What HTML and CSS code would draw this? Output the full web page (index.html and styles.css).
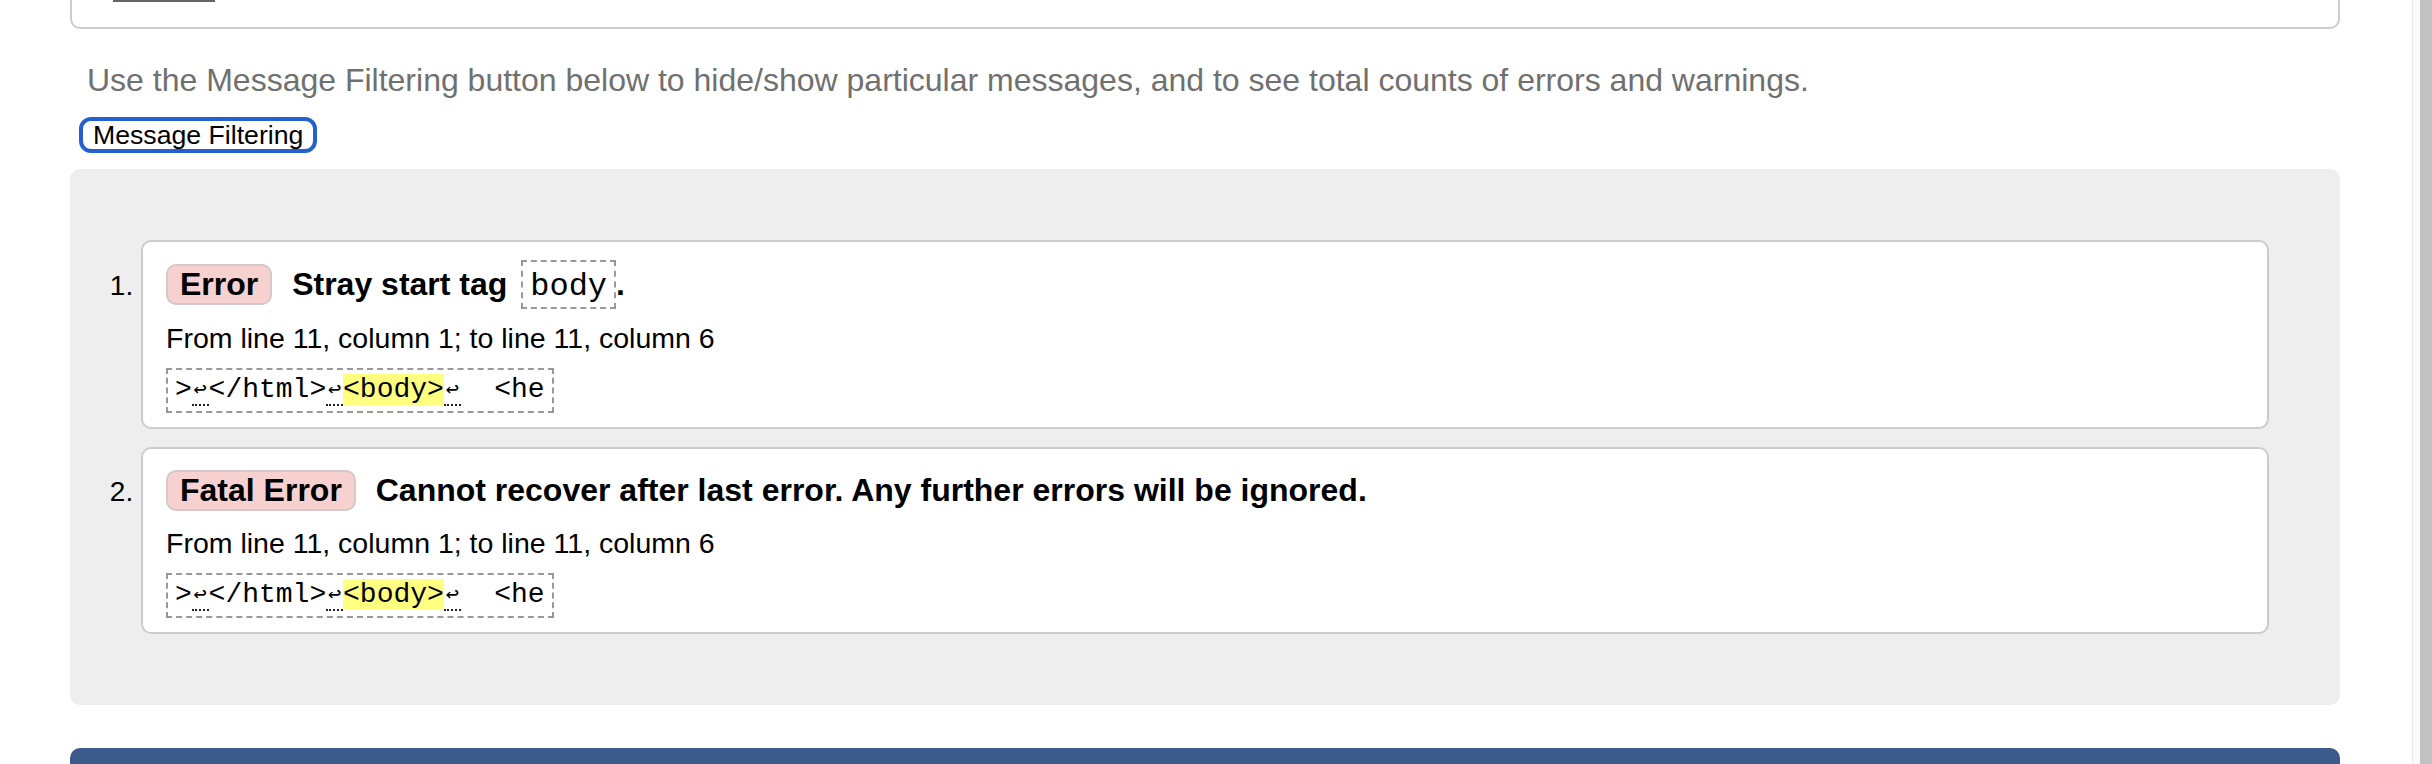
FILE: index.html
```html
<!DOCTYPE html>
<html lang="en">
<head>
<meta charset="utf-8">
<title>Nu Html Checker results</title>
<link rel="stylesheet" href="styles.css">
</head>
<body>
<main class="page">
  <div class="top-box"><div class="top-box-rule"></div></div>
  <p class="intro">Use the Message Filtering button below to hide/show particular messages, and to see total counts of errors and warnings.</p>
  <div class="filter-row"><button class="filter-btn" type="button">Message Filtering</button></div>
  <section class="results">
    <ol class="messages">
      <li class="card">
        <p class="title"><span class="badge">Error</span> <span>Stray start tag <code class="code-inline">body</code>.</span></p>
        <p class="location">From line 11, column 1; to line 11, column 6</p>
        <p class="extract-line"><code class="extract">&gt;<span class="lf">↩</span>&lt;/html&gt;<span class="lf">↩</span><mark class="hl">&lt;body&gt;</mark><span class="lf">↩</span>  &lt;he</code></p>
      </li>
      <li class="card">
        <p class="title"><span class="badge">Fatal Error</span> <span>Cannot recover after last error. Any further errors will be ignored.</span></p>
        <p class="location">From line 11, column 1; to line 11, column 6</p>
        <p class="extract-line"><code class="extract">&gt;<span class="lf">↩</span>&lt;/html&gt;<span class="lf">↩</span><mark class="hl">&lt;body&gt;</mark><span class="lf">↩</span>  &lt;he</code></p>
      </li>
    </ol>
  </section>
  <div class="footer-bar"></div>
</main>
<aside class="scrollbar"><div class="scrollbar-thumb"></div></aside>
</body>
</html>
```
FILE: styles.css
```css
html, body {
  margin: 0;
  padding: 0;
  height: 764px;
  overflow: hidden;
  background: #fff;
}

body {
  display: flex;
  font-family: "Liberation Sans", Arial, sans-serif;
  color: #000;
}

.page {
  flex: 1;
  min-width: 0;
  padding: 0 72px 0 70px;
}

.top-box {
  height: 27px;
  border: 2px solid #ccc;
  border-top: none;
  border-radius: 0 0 10px 10px;
}

.top-box-rule {
  margin-left: 41px;
  width: 102px;
  height: 2px;
  background: #666;
}

.intro {
  margin: 33px 0 0;
  padding-left: 17px;
  font-size: 32px;
  line-height: 37px;
  color: #707070;
}

.filter-row {
  margin: 18px 0 0 9px;
}

.filter-btn {
  display: block;
  height: 36px;
  margin: 0;
  padding: 0 10px;
  border: 4px solid #2460cf;
  border-radius: 12px;
  background: #fff;
  color: #000;
  font-family: "Liberation Sans", Arial, sans-serif;
  font-size: 26.67px;
  line-height: 28px;
}

.results {
  margin-top: 16px;
  background: #eee;
  border-radius: 10px;
  padding: 71px 71px 71px 71px;
}

.messages {
  margin: 0;
  padding: 0;
  list-style: decimal outside;
}

.card {
  background: #fff;
  border: 2px solid #ccc;
  border-radius: 10px;
  padding: 18px 24px 14px 23px;
  margin: 0 0 18px;
  font-size: 28px;
}

.card:last-child {
  margin-bottom: 0;
}

.card::marker {
  font-size: 28px;
  color: #000;
}

.title {
  margin: 0;
  font-size: 32px;
  font-weight: bold;
  line-height: 47px;
}

.badge {
  display: inline-block;
  margin-right: 11px;
  padding: 0 12px;
  border: 2px solid #d4c8c8;
  border-radius: 10px;
  background: #f7d0d0;
  line-height: 37px;
}

.code-inline {
  display: inline-block;
  margin-left: 5px;
  padding: 6px 7px 2px;
  border: 2px dashed #999;
  font-family: "Liberation Mono", "Courier New", monospace;
  font-size: 32px;
  font-weight: normal;
  line-height: 37px;
}

.location {
  margin: 13px 0 0;
  font-size: 28.5px;
  line-height: 32px;
}

.extract-line {
  margin: 14px 0 0;
  line-height: 45px;
}

.extract {
  display: inline-block;
  padding: 4px 7px 5px;
  border: 2px dashed #999;
  font-family: "Liberation Mono", "Courier New", monospace;
  font-size: 28px;
  line-height: 32px;
  white-space: pre;
  vertical-align: top;
}

.lf {
  display: inline-block;
  width: 16.8px;
  height: 30px;
  border-bottom: 2px dotted #222;
  font-family: "DejaVu Sans Mono", monospace;
  font-size: 22px;
  line-height: 30px;
  text-align: center;
  vertical-align: top;
}

.hl {
  background: #ffff80;
  color: inherit;
}

.footer-bar {
  margin-top: 43px;
  height: 40px;
  background: #3c5a8c;
  border-radius: 10px 10px 0 0;
}

.scrollbar {
  width: 19px;
  height: 764px;
  border-left: 1px solid #e8e8e8;
  background: #fafafa;
  display: flex;
  justify-content: flex-end;
}

.scrollbar-thumb {
  width: 12px;
  background: #c1c1c1;
}
```
